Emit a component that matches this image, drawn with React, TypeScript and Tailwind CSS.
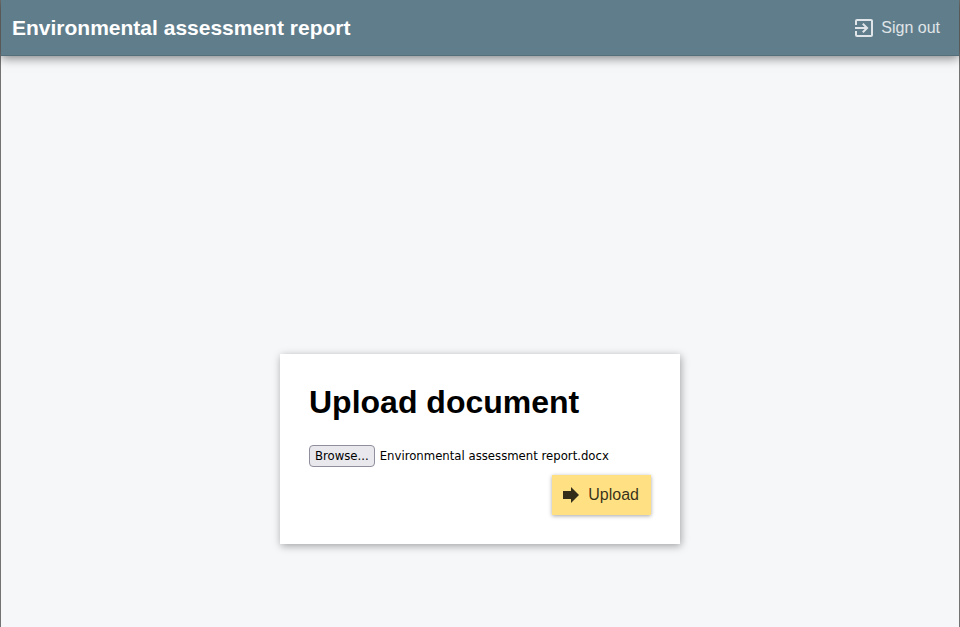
import { useRef, useState } from "react";
import { MdExitToApp, MdForward } from "react-icons/md";

export default function App() {
  const fileInput = useRef<HTMLInputElement>(null);
  const [fileName, setFileName] = useState<string>(
    "Environmental assessment report.docx"
  );

  const handleFileChange = (e: React.ChangeEvent<HTMLInputElement>) => {
    const file = e.target.files?.[0];
    if (file) setFileName(file.name);
  };

  return (
    <div className="flex min-h-screen flex-col border-x border-[#737373] bg-[#f5f7f9] font-['Liberation_Sans',Arial,sans-serif]">
      <header className="flex h-14 items-center justify-between border-b border-[#546e7a] bg-[#607d8b] pr-[19px] pl-[11px] shadow-[0_2px_10px_rgba(0,0,0,0.5)]">
        <h1 className="text-[21px] leading-6 font-bold text-white">
          Environmental assessment report
        </h1>
        <a href="#" className="flex items-center gap-[5px] text-base text-white/80">
          <MdExitToApp size={24} />
          Sign out
        </a>
      </header>

      <main className="flex flex-1 flex-col items-center justify-end pb-[83px]">
        <form
          className="w-full max-w-[400px] bg-white p-[29px] shadow-[1px_2px_8px_rgba(0,0,0,0.35)]"
          onSubmit={(e) => e.preventDefault()}
        >
          <h2 className="text-[32px] leading-[38px] font-bold text-black">
            Upload document
          </h2>

          {/* File picker */}
          <div className="relative mt-6 flex items-center gap-[5px] font-['DejaVu_Sans_Condensed','Noto_Sans',sans-serif] text-[13px] leading-5 text-black">
            <input
              ref={fileInput}
              id="document"
              type="file"
              tabIndex={-1}
              className="sr-only"
              onChange={handleFileChange}
            />
            <button
              type="button"
              className="rounded-[4px] border border-[#8f8f9d] bg-[#e9e9ed] px-[5px]"
              onClick={() => fileInput.current?.click()}
            >
              Browse...
            </button>
            <label htmlFor="document">{fileName}</label>
          </div>

          <div className="mt-2 flex justify-end">
            <button
              type="submit"
              className="flex h-10 items-center gap-[5px] bg-[#ffe082] pr-3 pl-[7px] text-base text-black/80 shadow-[0_1px_4px_rgba(0,0,0,0.35)]"
            >
              <MdForward size={24} />
              Upload
            </button>
          </div>
        </form>
      </main>
    </div>
  );
}
